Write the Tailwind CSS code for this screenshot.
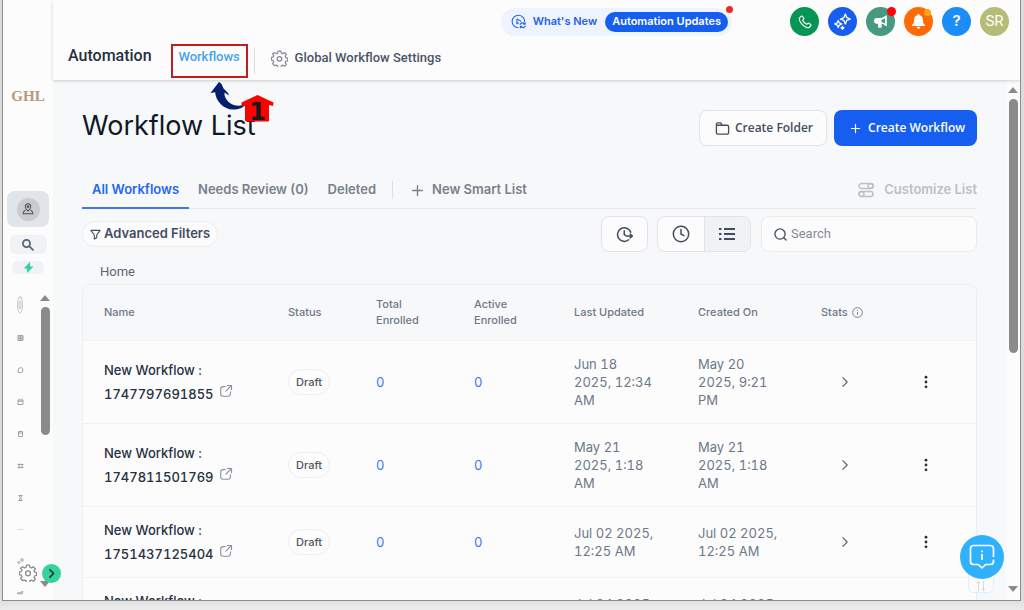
<!DOCTYPE html>
<html lang="en">
<head>
<meta charset="utf-8">
<meta name="viewport" content="width=device-width, initial-scale=1">
<title>Workflow List</title>
<script src="https://cdn.jsdelivr.net/npm/@tailwindcss/browser@4"></script>
</head>
<body class="h-screen overflow-hidden bg-linear-to-b from-[#dcdcdc] from-98% to-[#ededed] pl-0.5 pr-[3px] pb-[9px] font-['Inter','Liberation_Sans',sans-serif]">
<svg class="hidden" aria-hidden="true">
  <symbol id="gear" viewBox="0 0 24 24"><path fill="none" stroke="currentColor" stroke-width="1.7" stroke-linejoin="round" d="M10 1.5h4l.6 3 1.9.8 2.5-1.7 2.8 2.8-1.7 2.5.8 1.9 2.6.6v3.9l-2.6.6-.8 1.9 1.7 2.5-2.8 2.8-2.5-1.7-1.9.8-.6 2.8h-4l-.6-2.8-1.9-.8L5 22.100 2.200 19.300l1.700-2.500-.8-1.900-2.600-.600v-3.900l2.600-.600.8-1.900-1.700-2.500L5 3.600l2.500 1.700 1.900-.8z"/><circle cx="12" cy="12.500" r="3.200" fill="none" stroke="currentColor" stroke-width="1.7"/></symbol>
  <symbol id="external" viewBox="0 0 16 16"><path fill="none" stroke="currentColor" stroke-width="1.300" stroke-linecap="round" stroke-linejoin="round" d="M7 3H4.500A2.500 2.500 0 0 0 2 5.500v6A2.500 2.500 0 0 0 4.500 14h6a2.500 2.500 0 0 0 2.500-2.500V9M9.500 1.700h4.800v4.800M14 2 7.800 8.200"/></symbol>
  <symbol id="chevron" viewBox="0 0 16 16"><path fill="none" stroke="currentColor" stroke-width="1.400" stroke-linecap="round" stroke-linejoin="round" d="m5.500 3 5 5-5 5"/></symbol>
  <symbol id="dots" viewBox="0 0 16 16"><g fill="currentColor"><circle cx="8" cy="2.500" r="1.600"/><circle cx="8" cy="8" r="1.600"/><circle cx="8" cy="13.500" r="1.600"/></g></symbol>
  <symbol id="plus" viewBox="0 0 16 16"><path fill="none" stroke="currentColor" stroke-width="1.700" stroke-linecap="round" d="M8 2v12M2 8h12"/></symbol>
</svg>

<div class="relative flex h-full overflow-hidden border-x border-b border-[#8c8c8c] bg-[#fcfcfd]">

  <aside class="relative flex w-[50px] shrink-0 flex-col items-center pt-[86px]">
    <a href="#" class="font-['Liberation_Serif',serif] text-[15px] leading-5 font-bold text-[#b4977c]">GHL</a>
    <button aria-label="Account" class="mt-[85px] flex h-9 w-[42px] items-center justify-center rounded-lg bg-[#e1e4e9]">
      <span class="flex size-[23px] items-center justify-center rounded-full bg-[#c9cbcf] text-[#4b4f56]">
        <svg class="size-3" viewBox="0 0 14 14" fill="none" stroke="currentColor" stroke-width="1.200"><path d="M7 9.500C5 7.600 3.800 6 3.800 4.200a3.200 3.200 0 0 1 6.400 0C10.200 6 9 7.600 7 9.500z"/><circle cx="7" cy="4.200" r="1"/><path d="M4 8.500c-1.500.3-3 3.200-2.600 4h11.200c.4-.8-1.100-3.700-2.600-4"/></svg>
      </span>
    </button>
    <button aria-label="Search" class="mt-2 flex h-[19px] w-[37px] items-center justify-center rounded-md bg-[#f0f2f5] text-[#566376]">
      <svg class="size-3" viewBox="0 0 12 12" fill="none" stroke="currentColor" stroke-width="1.700"><circle cx="4.500" cy="4.500" r="3.600"/><path d="m7.200 7.200 4.300 4.300"/></svg>
    </button>
    <button aria-label="Quick actions" class="mt-[7px] flex h-[13px] w-8 items-center justify-center rounded-md bg-[#f0f2f5] text-[#37cf9b]">
      <svg class="size-[11px]" viewBox="0 0 12 12" fill="currentColor"><path d="M7.500 0 .8 7.200h3.400L4.600 12l6.800-7.200H7.900z"/></svg>
    </button>
    <div class="mt-5 flex w-full flex-1 justify-between">
      <nav aria-label="Main" class="flex w-[34px] flex-col items-center gap-[22px] text-[#a3a3a6]">
        <svg class="-mb-[3px] h-5 w-2" viewBox="0 0 8 20" fill="none" stroke="#c9c9cc"><ellipse cx="4" cy="11" rx="2.500" ry="8"/><ellipse cx="4" cy="11" rx="1" ry="4"/><path d="M4 2.500 6 5" stroke="#f0a070"/></svg>
        <svg class="h-[10px] w-[7px]" viewBox="0 0 7 10" fill="#d0d0d2" stroke="currentColor"><path d="M1 2.500h5v5H1zM1 5h5M3.500 2.500v5"/></svg>
        <svg class="h-[10px] w-[7px]" viewBox="0 0 7 10" fill="none" stroke="currentColor"><path d="M1.200 7.500V5a2.400 2.400 0 1 1 2.400 2.500z"/></svg>
        <svg class="h-[10px] w-[7px]" viewBox="0 0 7 10" fill="none" stroke="currentColor"><path d="M1 3h5v4.500H1zM1 4.200h5M2 1.800v1M5 1.800v1"/></svg>
        <svg class="h-[10px] w-[7px]" viewBox="0 0 7 10" fill="none" stroke="currentColor"><path d="M1.500 2.500h4v5h-4zM1.500 4h4"/></svg>
        <svg class="h-[10px] w-[7px]" viewBox="0 0 7 10" fill="none" stroke="currentColor"><path d="M.5 3.500h6M.5 6.500h6M2 2.500v5M5 2.500v5"/></svg>
        <svg class="h-[10px] w-[7px]" viewBox="0 0 7 10" fill="none" stroke="currentColor"><path d="M1.500 2.500h4M1.500 7.500h4M2 2.500l3 5M5 2.500l-3 5"/></svg>
        <svg class="h-[10px] w-[7px]" viewBox="0 0 7 10" stroke="#dcdcde"><path d="M0 4.500h7"/></svg>
        <svg class="h-[10px] w-[7px]" viewBox="0 0 7 10" fill="none" stroke="currentColor"><circle cx="5" cy="3" r="1.300"/><circle cx="1.800" cy="5.500" r="1"/></svg>
        <svg class="h-[10px] w-[7px]" viewBox="0 0 7 10" fill="none" stroke="currentColor"><path d="M0 4.500 6 2.500 5 5z"/></svg>
      </nav>
      <div class="mr-0.5 flex w-3 flex-col items-center pt-px pb-[13px]" aria-hidden="true">
        <svg class="h-1.5 w-2.5 shrink-0" viewBox="0 0 10 6" fill="#8b8b8b"><path d="M5 0l5 6H0z"/></svg>
        <div class="mt-1.5 h-32 w-[9px] rounded-full bg-[#8b8b8b]"></div>
        <svg class="mt-auto h-1.5 w-2.5 shrink-0" viewBox="0 0 10 6" fill="#8b8b8b"><path d="M5 6l5-6H0z"/></svg>
      </div>
    </div>
    <button aria-label="Settings" class="absolute bottom-[18px] left-4 text-[#8b8b90]"><svg class="size-[18px]"><use href="#gear"/></svg></button>
    <button aria-label="Expand sidebar" class="absolute bottom-[17px] left-[39px] z-20 flex size-[19px] items-center justify-center rounded-full bg-[#35d39a] text-[#123c3a]"><svg class="size-[13px]" viewBox="0 0 16 16" fill="none" stroke="currentColor" stroke-width="2"><path d="m5.500 3 5 5-5 5"/></svg></button>
  </aside>

  <div class="flex min-w-0 flex-1 flex-col">
    <header class="relative z-10 h-20 shrink-0 bg-[#fcfcfd] shadow-[0_1px_3px_rgba(0,0,0,0.18)]">
      <div class="flex items-center justify-end gap-[9px] pt-[7px] pr-[11px]">
        <div class="relative mr-[49px] flex h-7 items-center rounded-full bg-[#eef3fe] pr-1 pl-[10px]">
          <a href="#" class="flex items-center gap-[7px] text-[11px] font-semibold text-[#2463e8]">
            <svg class="size-[15px]" viewBox="0 0 16 16" fill="none" stroke="currentColor" stroke-width="1.200" stroke-linejoin="round"><path d="M14.600 8.500A6.700 6.700 0 1 0 8 14.700M6.300 5.200v5.300l2-1.200M6.300 5.200 11 8"/><path d="M9.500 11.500c1-2.500 3.500-2.500 5-1M15 8.800v2h-2M15.500 12.500c-1 2.500-3.500 2.500-5 1M10 15.200v-2h2"/></svg>
            What's New</a>
          <a href="#" class="ml-2 flex h-5 items-center rounded-full bg-[#155eef] px-[7px] text-[11px] font-semibold text-white">Automation Updates</a>
          <span class="absolute -top-0.5 -right-px size-[7px] rounded-full bg-[#ea2a2a]"></span>
        </div>
        <button aria-label="Phone" class="flex size-[29px] items-center justify-center rounded-full bg-[#079455] text-white"><svg class="size-[14px]" viewBox="0 0 24 24" fill="none" stroke="currentColor" stroke-width="1.900" stroke-linejoin="round"><path d="M3 4.500 5.500 2c.8-.6 1.600-.5 2.200.3l2 3c.5.8.4 1.500-.2 2.100L8 9c1 2.700 4.200 5.900 7 7l1.600-1.600c.6-.6 1.400-.6 2.100-.2l3 2c.8.6.9 1.500.3 2.200L19.500 21c-1 .9-2.400 1-3.800.6C10 20 4 14 2.400 8.300 2 6.900 2.100 5.500 3 4.500z"/></svg></button>
        <button aria-label="AI assistant" class="flex size-[29px] items-center justify-center rounded-full bg-[#155eef] text-white"><svg class="size-[17px]" viewBox="0 0 24 24" fill="none" stroke="currentColor" stroke-width="1.900" stroke-linejoin="round"><path d="M16 1.500l2 5 5 2-5 2-2 5-2-5-5-2 5-2zM6 10.500 7.500 14l3.500 1.500L7.500 17 6 20.500 4.500 17 1 15.500 4.500 14zM12 19l.6 1.400 1.400.6-1.400.6L12 23l-.6-1.400L10 21l1.400-.6z"/></svg></button>
        <button aria-label="Announcements" class="relative flex size-[29px] items-center justify-center rounded-full bg-[#479980] text-white"><svg class="size-[14px]" viewBox="0 0 24 24" fill="currentColor"><path fill-rule="evenodd" d="M22 1v18h-2c-2-2-4-3.300-7-3.800V22H7v-7H5a4.500 4.500 0 0 1 0-10h6c4 0 6.500-1.500 9-4zm-3 4.500c-1.800 1.300-3.600 2-6 2.300v4.600c2.400.3 4.200 1 6 2.300z"/></svg><span class="absolute top-0 -right-px size-[9px] rounded-full bg-[#fb0207]"></span></button>
        <button aria-label="Notifications" class="relative flex size-[29px] items-center justify-center rounded-full bg-[#ff6a06] text-white"><svg class="size-[15px]" viewBox="0 0 24 24" fill="currentColor"><path d="M12 0a2 2 0 0 1 2 2c3 .8 5 3.500 5 7 0 4 .5 6 3 8v2H2v-2c2.500-2 3-4 3-8 0-3.500 2-6.200 5-7a2 2 0 0 1 2-2zM9 20.500h6a3 3 0 0 1-6 0z"/></svg><span class="absolute top-0.5 right-0.5 size-[7px] rounded-full bg-[#ffa311]"></span></button>
        <button aria-label="Help" class="flex size-[29px] items-center justify-center rounded-full bg-[#1b8df7] text-[15px] font-semibold text-white">?</button>
        <button aria-label="Account SR" class="flex size-[29px] items-center justify-center rounded-full bg-[#b4bc75] font-['Roboto',sans-serif] text-[15px] text-white">SR</button>
      </div>
      <nav aria-label="Automation" class="mt-2 flex h-[34px] items-start pl-[15px] font-['Roboto',sans-serif] font-medium">
        <span class="text-base leading-6 text-[#273040]">Automation</span>
        <a href="#" class="ml-[19px] flex h-[34px] w-[77px] justify-center border-2 border-[#bd1f20] pt-[3px] text-[13px] leading-4 text-[#48a2ec]">Workflows</a>
        <span class="mr-4 ml-1.5 h-[26px] w-px bg-[#dadde2] self-center"></span>
        <a href="#" class="flex items-center gap-[7px] pt-0.5 text-[13px] leading-6 text-[#4b5565]"><svg class="size-[17px] text-[#8a8c92]"><use href="#gear"/></svg>Global Workflow Settings</a>
      </nav>
    </header>

    <div class="flex min-h-0 flex-1">
      <main class="min-w-0 flex-1 overflow-hidden bg-[#f7f8fa] px-[29px] pt-[30px]">
        <div class="flex items-center justify-between">
          <h1 class="-mt-1 text-[27px] leading-9 text-[#101828]">Workflow List</h1>
          <div class="flex gap-[7px] text-xs font-semibold font-['Open_Sans',sans-serif]">
            <button class="flex h-9 items-center gap-[5px] rounded-lg border border-[#e1e3e8] bg-[#fcfcfd] pr-[13px] pl-[15px] text-[#434d5e]"><svg class="size-[15px]" viewBox="0 0 16 16" fill="none" stroke="currentColor" stroke-width="1.400" stroke-linejoin="round"><path d="M1.500 12.500v-9A1.500 1.500 0 0 1 3 2h3l1.700 2.500H13A1.500 1.500 0 0 1 14.500 6v6.500A1.500 1.500 0 0 1 13 14H3a1.500 1.500 0 0 1-1.500-1.500zM1.500 4.500h6"/></svg>Create Folder</button>
            <button class="flex h-9 items-center gap-[7px] rounded-lg bg-[#155eef] pr-3 pl-4 text-white"><svg class="size-[11px]"><use href="#plus"/></svg>Create Workflow</button>
          </div>
        </div>

        <div class="mt-[26px] flex items-stretch border-b border-[#e6e8ec] text-[13px] font-semibold text-[#7a808b]">
          <div role="tablist" class="flex gap-[19px]">
            <button role="tab" aria-selected="true" class="-mb-px h-[37px] border-b-2 border-[#3f76f3] px-[10px] text-[#2468ee]">All Workflows</button>
            <button role="tab" aria-selected="false" class="-ml-[10px]">Needs Review (0)</button>
            <button role="tab" aria-selected="false">Deleted</button>
          </div>
          <span class="mr-[18px] ml-4 h-[18px] w-px self-center bg-[#dcdfe4]"></span>
          <button class="flex items-center gap-2"><svg class="size-[13px]"><use href="#plus"/></svg>New Smart List</button>
          <button disabled class="ml-auto flex items-center gap-[10px] text-[#bcbfc4]"><svg class="size-4" viewBox="0 0 16 16" fill="none" stroke="currentColor" stroke-width="1.400"><rect x="1" y="1.500" width="14" height="5" rx="2.500"/><circle cx="12.500" cy="4" r="2.500"/><rect x="1" y="9.500" width="14" height="5" rx="2.500"/><circle cx="3.500" cy="12" r="2.500"/></svg>Customize List</button>
        </div>

        <div class="mt-[7px] flex items-center text-[#434d5e]">
          <button class="flex h-[26px] items-center gap-[3px] rounded-full border border-[#eceef1] bg-[#fcfcfd] px-[7px] text-[13px] font-semibold"><svg class="size-[11px]" viewBox="0 0 12 12" fill="none" stroke="currentColor" stroke-width="1.200" stroke-linejoin="round"><path d="M1 1.500h10L7.300 6.500v3l-2.600 1.500V6.500z"/></svg>Advanced Filters</button>
          <button aria-label="Execution history" class="ml-auto flex h-9 w-[47px] items-center justify-center rounded-lg border border-[#e1e3e8] bg-[#fcfcfd]"><svg class="size-[17px]" viewBox="0 0 18 18" fill="none" stroke="currentColor" stroke-width="1.600" stroke-linecap="round" stroke-linejoin="round"><path d="M15.600 6.500A7.200 7.200 0 1 0 13.500 14.600M8.700 5v4.200l2.600 1.600M12.500 10.500h4.500M15 8.500l2.300 2-2.300 2"/></svg></button>
          <div class="ml-[9px] flex h-9 w-[94px] overflow-hidden rounded-lg border border-[#e1e3e8] bg-[#fcfcfd]">
            <button aria-label="Recent" class="flex flex-1 items-center justify-center"><svg class="size-[18px]" viewBox="0 0 18 18" fill="none" stroke="currentColor" stroke-width="1.500" stroke-linecap="round"><circle cx="9" cy="9" r="7.700"/><path d="M9 4.500V9l3 1.700"/></svg></button>
            <button aria-label="List view" aria-pressed="true" class="flex flex-1 items-center justify-center border-l border-[#e1e3e8] bg-[#f1f2f5]"><svg class="h-[14px] w-4" viewBox="0 0 16 14" fill="none" stroke="currentColor" stroke-width="1.800"><path d="M5 2h11M5 7h11M5 12h11M0 2h2.500M0 7h2.500M0 12h2.500"/></svg></button>
          </div>
          <label class="ml-[10px] flex h-9 w-[216px] items-center gap-1 rounded-lg border border-[#e8eaee] bg-[#fcfcfd] px-3">
            <svg class="size-[13px] shrink-0" viewBox="0 0 14 14" fill="none" stroke="currentColor" stroke-width="1.400" stroke-linecap="round"><circle cx="6.500" cy="6.500" r="5.500"/><path d="m10.500 10.500 2.500 2.500"/></svg>
            <input type="search" aria-label="Search workflows" placeholder="Search" class="w-full min-w-0 bg-transparent font-['Roboto',sans-serif] text-[13px] outline-none placeholder:text-[#858b96]">
          </label>
        </div>

        <nav aria-label="Breadcrumb" class="mt-[11px] pl-[18px] font-['Roboto',sans-serif] text-[13px] leading-[18px] text-[#5e6673]"><a href="#">Home</a></nav>

        <div class="mt-[3px] overflow-hidden rounded-t-lg border border-[#eceef2] bg-[#fcfcfd]">
          <table class="w-full table-fixed text-left tabular-nums">
            <colgroup><col class="w-[184px]"><col class="w-[88px]"><col class="w-[98px]"><col class="w-[100px]"><col class="w-[124px]"><col class="w-[123px]"><col class="w-[98px]"><col class="w-[78px]"></colgroup>
            <thead class="bg-[#f7f8fa] text-[11px] leading-4 text-[#6f7887]">
              <tr class="h-[55px] border-b border-[#eff1f4]">
                <th class="pl-[21px] font-medium">Name</th>
                <th class="pl-[21px] font-medium">Status</th>
                <th class="pl-[21px] font-medium">Total<br>Enrolled</th>
                <th class="pl-[21px] font-medium">Active<br>Enrolled</th>
                <th class="pl-[21px] font-medium">Last Updated</th>
                <th class="pl-[21px] font-medium">Created On</th>
                <th class="pl-[21px] font-medium"><span class="flex items-center gap-1">Stats <svg class="size-[11px]" viewBox="0 0 12 12" fill="none" stroke="currentColor"><circle cx="6" cy="6" r="5.300"/><path d="M6 5.500v3M6 3.300v1"/></svg></span></th>
                <th aria-label="Actions"></th>
              </tr>
            </thead>
            <tbody id="rows" class="text-[13px] leading-[18px] text-[#6f7887]"></tbody>
          </table>
        </div>
      </main>
      <div class="flex w-[14px] shrink-0 flex-col items-center bg-[#fcfcfd] pt-[7px] pb-2" aria-hidden="true">
        <svg class="h-1.5 w-2.5 shrink-0" viewBox="0 0 10 6" fill="#8b8b8b"><path d="M5 0l5 6H0z"/></svg>
        <div class="mt-1.5 h-[254px] w-[9px] rounded-full bg-[#8b8b8b]"></div>
        <svg class="mt-auto h-1.5 w-2.5 shrink-0" viewBox="0 0 10 6" fill="#8b8b8b"><path d="M5 6l5-6H0z"/></svg>
      </div>
    </div>
  </div>

  <div class="absolute right-[26px] bottom-[7px] flex h-6 w-[26px] items-end justify-center rounded-md border border-[#e2effa] bg-[#fcfcfd] text-[#d5d8dd]"><svg class="size-3" viewBox="0 0 12 12" fill="none" stroke="currentColor"><path d="M3.500 11V1.500M1.500 3.500l2-2 2 2M8.500 1v9.500M6.500 8.500l2 2 2-2"/></svg></div>
  <button aria-label="Open help chat" class="absolute right-4 bottom-[21px] flex size-[44px] items-center justify-center rounded-full bg-[#30b1fc] text-white"><svg class="size-[26px]" viewBox="0 0 26 26" fill="none" stroke="currentColor" stroke-width="1.700" stroke-linejoin="round"><path d="M24.500 13V4.500a3 3 0 0 0-3-3h-17a3 3 0 0 0-3 3v13a3 3 0 0 0 3 3h4.800L13 24l3.700-3.500h4.800a3 3 0 0 0 3-3v-2M13 10v6M13 6.500v1.700"/></svg></button>

  <svg class="absolute top-[80px] left-[204px] z-20 h-[46px] w-[68px]" viewBox="0 0 68 46" aria-hidden="true">
    <path d="M12 2 3.500 13l4.700-.8C8.500 21 17 29.500 26 29.500c6 0 10-1.500 13-5.500-5 2.500-12 2.300-16.500-1.300-4-3.200-5.500-7-5-10.200L22 15.500c-.5-3-3-4.500-5-6.500-1.500-1.500-1.500-5.500-5-7z" fill="#071d6e"/>
    <path d="M50.500 15 66.500 22.500 66 26 62 25v15.500q0 1-1 1H39.500q-1.500 0-1.500-1.500V25l-3.500 1V22.500z" fill="#fe0000"/>
    <text x="50.500" y="39.500" text-anchor="middle" font-family="DejaVu Sans, sans-serif" font-weight="700" font-size="24" fill="#17171f">1</text>
  </svg>
</div>

<template id="row">
  <tr class="border-b border-[#f0f2f5]">
    <td class="py-[11px] pl-[21px] leading-6 font-medium text-[#273040]"><span>New Workflow :</span><br><span class="flex items-center gap-[5px]"><a href="#" data-f="id"></a><svg class="-mt-1.5 size-[14px] text-[#8c929d]"><use href="#external"/></svg></span></td>
    <td class="pl-[21px]"><span class="inline-flex h-[26px] items-center rounded-full border border-[#eceef2] px-[7px] text-[11px] font-medium text-[#4b5565]">Draft</span></td>
    <td class="pl-[21px] text-[#3f76f3]"><a href="#">0</a></td>
    <td class="pl-[21px] text-[#3f76f3]"><a href="#">0</a></td>
    <td class="py-[14px] pl-[21px]" data-f="updated"></td>
    <td class="py-[14px] pl-[21px]" data-f="created"></td>
    <td class="pl-[38px]"><button aria-label="Show stats" class="block text-[#5e6673]"><svg class="size-[14px]"><use href="#chevron"/></svg></button></td>
    <td class="pl-[21px]"><button aria-label="More actions" class="block text-[#273040]"><svg class="size-[14px]"><use href="#dots"/></svg></button></td>
  </tr>
</template>
<script>
const data = [
  ['1747797691855', 'Jun 18\n2025, 12:34\nAM', 'May 20\n2025, 9:21\nPM'],
  ['1747811501769', 'May 21\n2025, 1:18\nAM', 'May 21\n2025, 1:18\nAM'],
  ['1751437125404', 'Jul 02 2025,\n12:25 AM', 'Jul 02 2025,\n12:25 AM'],
  ['1751630482917', 'Jul 04 2025,\n12:25 AM', 'Jul 04 2025,\n12:25 AM']
];
const tpl = document.getElementById('row');
for (const [id, updated, created] of data) {
  const r = tpl.content.cloneNode(true);
  r.querySelector('[data-f=id]').textContent = id;
  r.querySelector('[data-f=updated]').innerText = updated;
  r.querySelector('[data-f=created]').innerText = created;
  document.getElementById('rows').append(r);
}
</script>
</body>
</html>
